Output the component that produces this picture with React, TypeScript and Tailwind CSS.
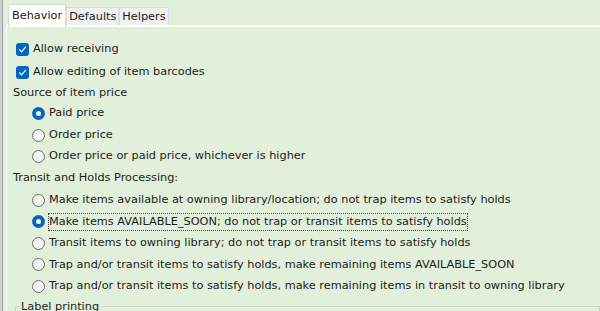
import { useState } from "react";

const Check = () => (
  <span className="w-[13px] h-[13px] rounded-[3px] bg-[#0067c0] flex items-center justify-center shrink-0">
    <svg width="9" height="9" viewBox="0 0 9 9" fill="none">
      <path d="M1.5 4.8 L3.6 6.8 L7.6 2.2" stroke="white" strokeWidth="1.2" strokeLinecap="round" strokeLinejoin="round" />
    </svg>
  </span>
);

const Radio = ({ checked }: { checked: boolean }) =>
  checked ? (
    <span className="w-[13px] h-[13px] rounded-full bg-[#0067c0] flex items-center justify-center shrink-0">
      <span className="w-[5px] h-[5px] rounded-full bg-white" />
    </span>
  ) : (
    <span className="w-[13px] h-[13px] rounded-full border border-[#6b6b6b] bg-[#f4f4f4] shrink-0" />
  );

const priceOptions = [
  "Paid price",
  "Order price",
  "Order price or paid price, whichever is higher",
];

const holdsOptions = [
  "Make items available at owning library/location; do not trap items to satisfy holds",
  "Make items AVAILABLE_SOON; do not trap or transit items to satisfy holds",
  "Transit items to owning library; do not trap or transit items to satisfy holds",
  "Trap and/or transit items to satisfy holds, make remaining items AVAILABLE_SOON",
  "Trap and/or transit items to satisfy holds, make remaining items in transit to owning library",
];

export default function App() {
  const [price, setPrice] = useState(0);
  const [holds, setHolds] = useState(1);

  return (
    <div
      className="w-[600px] h-[311px] overflow-hidden bg-[#e2efda] flex text-[11.3px] text-[#1c1c1c]"
      style={{ fontFamily: '"DejaVu Sans", Verdana, sans-serif' }}
    >
      {/* edge of the window behind */}
      <div className="w-[3px] bg-[#cfd1d4] border-r border-[#9aa0a8] shrink-0" />

      <div className="flex-1 flex flex-col pl-[3px] pt-[4px]">
        {/* Tabs */}
        <div className="flex items-end pl-[2px] h-[21px] relative z-10">
          <div className="h-[23px] px-[3px] pt-[1px] bg-white border border-b-0 border-[#d9d9d9] flex items-center -mb-[2px]">
            Behavior
          </div>
          <div className="h-[18px] px-[2px] pt-[1px] bg-[#f0f0f0] border border-b-0 border-[#dcdcdc] flex items-center">
            Defaults
          </div>
          <div className="h-[18px] px-[2px] pt-[1px] bg-[#f0f0f0] border border-b-0 border-[#dcdcdc] flex items-center">
            Helpers
          </div>
        </div>

        {/* Panel */}
        <div className="flex-1 border-t-2 border-l border-white flex flex-col pt-[11px] pl-[6px]">
          <label className="h-[23px] flex items-center gap-[4px] pl-[3px]">
            <Check />
            <span>Allow receiving</span>
          </label>
          <label className="h-[22px] flex items-center gap-[4px] pl-[3px]">
            <Check />
            <span>Allow editing of item barcodes</span>
          </label>

          <div className="h-[20px] flex items-center">Source of item price</div>
          {priceOptions.map((o, i) => (
            <label
              key={o}
              className="h-[21.5px] flex items-center gap-[4px] pl-[19px]"
              onClick={() => setPrice(i)}
            >
              <Radio checked={price === i} />
              <span>{o}</span>
            </label>
          ))}

          <div className="h-[22px] flex items-center">Transit and Holds Processing:</div>
          {holdsOptions.map((o, i) => (
            <label
              key={o}
              className="h-[21.5px] flex items-center gap-[3px] pl-[19px]"
              onClick={() => setHolds(i)}
            >
              <Radio checked={holds === i} />
              <span className={holds === i ? "border border-dotted border-[#444] leading-[16px]" : "border border-transparent leading-[16px]"}>
                {o}
              </span>
            </label>
          ))}

          <fieldset className="mt-[3px] ml-[2px] border border-[#cdd6c8] h-[40px] px-[4px]">
            <legend className="px-[1px] leading-[13px]">Label printing</legend>
          </fieldset>
        </div>
      </div>
    </div>
  );
}
